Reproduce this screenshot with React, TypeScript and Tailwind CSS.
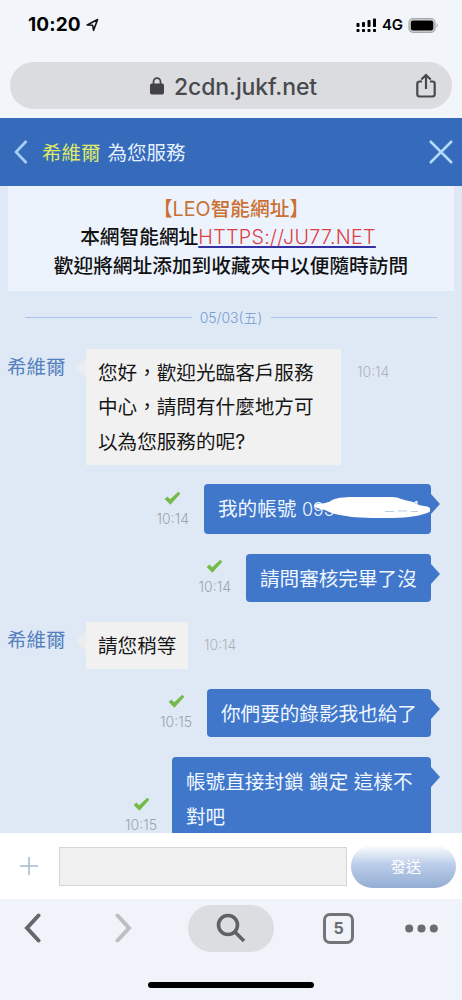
import { type ReactNode } from "react";

type Message = {
  id: number;
  from: "agent" | "me";
  time: string;
  width: string;
  lines: ReactNode[];
};

const AGENT = "希維爾";

const messages: Message[] = [
  {
    id: 1,
    from: "agent",
    time: "10:14",
    width: "w-[255px]",
    lines: ["您好，歡迎光臨客戶服務", "中心，請問有什麼地方可", "以為您服務的呢?"],
  },
  { id: 2, from: "me", time: "10:14", width: "w-[227px]", lines: [<HiddenAccount key="account" />] },
  { id: 3, from: "me", time: "10:14", width: "w-[185px]", lines: ["請問審核完畢了沒"] },
  { id: 4, from: "agent", time: "10:14", width: "w-[102px]", lines: ["請您稍等"] },
  { id: 5, from: "me", time: "10:15", width: "w-[224px]", lines: ["你們要的錄影我也給了"] },
  { id: 6, from: "me", time: "10:15", width: "w-[259px]", lines: ["帳號直接封鎖 鎖定 這樣不", "對吧"] },
];

function HiddenAccount() {
  return (
    <span className="flex justify-between">
      <span>
        我的帳號 <span className="font-['Inter'] text-[18px] font-light">093</span>
      </span>
      <span className="font-['Inter'] text-[18px] font-light">1</span>
      <svg className="absolute top-[10px] left-[108px]" width="118" height="27" viewBox="0 0 118 27">
        <path
          d="M2 11 C7 9 13 10 17 8 C25 2 38 3 50 3 L80 3 C87 3 90 6 97 7 C103 8 104 11 112 12 C120 13 121 17 115 19 C105 23 90 24 76 24 C62 24 45 24 34 22 C25 21 18 19 13 16 C9 15 2 14 2 11Z"
          fill="#fff"
        />
        <path d="M73 17.5 H82 M86 17 H95 M99 17.5 H106" stroke="#aabde0" strokeWidth="0.8" />
      </svg>
    </span>
  );
}

function StatusBar() {
  return (
    <div className="flex h-[62px] items-start justify-between pt-[13px] pr-[23px] pl-[28px] text-black">
      <div className="flex items-center gap-[5px]">
        <span className="text-[19px] leading-6 font-bold tracking-[0.1px]">10:20</span>
        <svg width="13" height="14" viewBox="0 0 13 14">
          <path
            d="M1.2 7 L11.6 1.5 L7.6 12.3 L6.6 7.2Z"
            fill="none"
            stroke="#111"
            strokeWidth="1.6"
            strokeLinejoin="round"
          />
        </svg>
      </div>
      <div className="flex h-6 items-center">
        <svg width="21" height="15" viewBox="0 0 21 15" fill="#000">
          <rect x="0.5" y="5" width="3" height="4" rx="0.8" />
          <rect x="6" y="4" width="3" height="5" rx="0.8" />
          <rect x="11.5" y="2" width="3" height="7" rx="0.8" />
          <rect x="17" y="0.5" width="3" height="8.5" rx="0.8" />
          <rect x="0.5" y="11" width="3" height="3" rx="0.8" />
          <rect x="6" y="11" width="3" height="3" rx="0.8" />
          <rect x="11.5" y="11" width="3" height="3" rx="0.8" />
          <rect x="17" y="11" width="3" height="3" rx="0.8" />
        </svg>
        <span className="ml-[5px] w-[21px] text-[15px] font-semibold tracking-[-0.3px]">4G</span>
        <svg className="ml-[5px]" width="31" height="15" viewBox="0 0 31 15">
          <rect x="1" y="0.7" width="26" height="13.6" rx="4" fill="#d5d7da" stroke="#a5a7aa" strokeWidth="1.2" />
          <rect x="2.8" y="2.5" width="22.5" height="10" rx="2.2" fill="#000" />
          <path d="M28.5 5 Q31 7.5 28.5 10Z" fill="#aaa" />
        </svg>
      </div>
    </div>
  );
}

function AddressBar() {
  return (
    <div className="mx-[10px] flex h-[47px] items-center rounded-full bg-[#dbdce0] pr-[16px] pl-[140px] text-[#48494d]">
      <svg width="14" height="18" viewBox="0 0 14 18">
        <rect x="0" y="6.5" width="14" height="11" rx="1.8" fill="#434347" />
        <path d="M3.5 7 V4.7 a3.5 3.5 0 0 1 7 0 V7" fill="none" stroke="#434347" strokeWidth="1.7" />
      </svg>
      <span className="mt-[3px] ml-[10px] flex-1 text-[23px] font-medium tracking-[-0.12px]">2cdn.jukf.net</span>
      <svg width="20" height="26" viewBox="0 0 20 26" fill="none" stroke="#48494d" strokeWidth="2.2">
        <path d="M6 8.5 H3.5 Q1.3 8.5 1.3 10.7 V21.3 Q1.3 23.5 3.5 23.5 H16.5 Q18.7 23.5 18.7 21.3 V10.7 Q18.7 8.5 16.5 8.5 H14" />
        <path d="M10 16 V2.5 M5.3 6.5 L10 2 L14.7 6.5" />
      </svg>
    </div>
  );
}

function ChatHeader() {
  return (
    <header className="mt-[9px] flex h-[68px] items-center bg-[#366abb] pr-[9px] pl-[14px]">
      <svg width="14" height="24" viewBox="0 0 14 24" fill="none" stroke="#a9d0f8" strokeWidth="2.6">
        <path d="M12.5 1 L2 12 L12.5 23" />
      </svg>
      <h1 className="mt-[3px] ml-[14px] flex-1 text-[19.5px] font-normal text-[#e4f1ff]">
        <span className="mr-[7px] text-[#dfec68]">{AGENT}</span>為您服務
      </h1>
      <svg width="24" height="24" viewBox="0 0 24 24" stroke="#b5d9fb" strokeWidth="2.5">
        <path d="M1 1 L23 23 M23 1 L1 23" />
      </svg>
    </header>
  );
}

function Notice() {
  return (
    <div className="mr-[8px] ml-[8px] h-[105px] shrink-0 bg-[#ecf3fd] pt-[9px] text-center text-[19.7px] leading-[28.4px] font-medium whitespace-nowrap text-[#111]">
      <p className="text-[#ca7032]">
        【<span className="font-normal">LEO</span>智能網址】
      </p>
      <p className="pr-[6px]">
        本網智能網址
        <a
          href="#"
          className="font-light tracking-[0.3px] text-[#dc3f42] underline decoration-[#3431a3] decoration-2 underline-offset-2"
        >
          HTTPS://JU77.NET
        </a>
      </p>
      <p>歡迎將網址添加到收藏夾中以便隨時訪問</p>
    </div>
  );
}

function DateLine() {
  return (
    <div className="mt-[12px] flex h-[28px] shrink-0 items-center pr-[25px] pl-[25px] text-[14px] text-[#759bd3]">
      <div className="h-px flex-1 bg-[#a9c3ea]" />
      <span className="w-[79px] text-center font-light">05/03(五)</span>
      <div className="h-px flex-1 bg-[#a9c3ea]" />
    </div>
  );
}

function Check() {
  return (
    <svg width="17" height="15" viewBox="0 0 17 15">
      <path d="M0.7 8 L3.4 5.6 L6.2 8.2 L14.3 0.8 L16.3 2.8 L6.4 13.8Z" fill="#73bb48" />
    </svg>
  );
}

function ChatMessage({ message }: { message: Message }) {
  const { from, time, width, lines } = message;

  if (from === "agent") {
    return (
      <div className="flex shrink-0">
        <span className="w-[68px] pt-px pl-[7px] text-[19.5px] leading-[34px] text-[#5580bd]">{AGENT}</span>
        <svg className="mt-[9px] ml-[8px]" width="10" height="20" viewBox="0 0 10 20">
          <path d="M10 0 L0 10 L10 20Z" fill="#ebedef" />
        </svg>
        <div
          className={`${width} bg-[#f1f1f1] pt-[7px] pb-[6px] pl-[12px] text-[19.6px] leading-[34.3px] whitespace-nowrap text-[#161616]`}
        >
          {lines.map((line, i) => (
            <p key={i}>{line}</p>
          ))}
        </div>
        <span className="mt-[11px] ml-[16px] text-[14px] leading-6 font-light text-[#aeb2b8]">{time}</span>
      </div>
    );
  }

  return (
    <div className="flex shrink-0 items-end justify-end pr-[22px]">
      <div className="mr-[15px] mb-[3px] flex flex-col items-center">
        <Check />
        <span className="mt-px text-[14px] leading-[24px] font-light text-[#9ea3ad]">{time}</span>
      </div>
      <div
        className={`${width} relative rounded-[4px] bg-[#4077cb] pt-[8px] pr-[12px] pb-[6px] pl-[14px] text-[19.6px] leading-[34.6px] whitespace-nowrap text-[#f0f7ff]`}
      >
        {lines.map((line, i) => (
          <p key={i}>{line}</p>
        ))}
      </div>
      <svg className="mt-[10px] self-start" width="9" height="20" viewBox="0 0 9 20">
        <path d="M0 0 L9 10 L0 20Z" fill="#4077cb" />
      </svg>
    </div>
  );
}

function Composer() {
  return (
    <div className="flex h-[66px] shrink-0 items-center bg-white pl-[20px]">
      <svg width="18" height="18" viewBox="0 0 18 18" stroke="#a7b7cf" strokeWidth="1.5">
        <path d="M9 0 V18 M0 9 H18" />
      </svg>
      <input
        className="ml-[21px] h-[39px] w-[288px] min-w-0 shrink-0 border border-[#d5d5d5] bg-[#f0f0f0]"
        type="text"
      />
      <button className="ml-[4px] h-[43px] w-[105px] shrink-0 rounded-full bg-linear-to-b from-white via-[#bccdea] via-45% to-[#93aed3] pt-[2px] pl-[5px] text-[15.2px] text-white">
        發送
      </button>
    </div>
  );
}

function Toolbar() {
  return (
    <nav className="flex h-[101px] shrink-0 flex-col bg-[#f0f3f9]">
      <div className="mt-[5px] flex h-[48px] items-center pl-[24px]">
        <svg
          width="17"
          height="30"
          viewBox="0 0 17 30"
          fill="none"
          stroke="#66676a"
          strokeWidth="4"
          strokeLinecap="round"
        >
          <path d="M14.5 2.5 L3 15 L14.5 27.5" />
        </svg>
        <svg
          className="ml-[74px]"
          width="17"
          height="30"
          viewBox="0 0 17 30"
          fill="none"
          stroke="#bcbec2"
          strokeWidth="4"
          strokeLinecap="round"
        >
          <path d="M2.5 2.5 L14 15 L2.5 27.5" />
        </svg>
        <div className="ml-[56px] flex h-[47px] w-[86px] items-center justify-center rounded-full bg-[#dbdde1]">
          <svg width="30" height="30" viewBox="0 0 30 30" fill="none" stroke="#606164" strokeWidth="3.6">
            <circle cx="12" cy="12" r="9.5" />
            <path d="M19 19 L28 28" />
          </svg>
        </div>
        <div className="ml-[49px] flex h-[31px] w-[31px] items-center justify-center rounded-[7px] border-[3px] border-[#737477] text-[16px] font-bold text-[#6b6c6f]">
          5
        </div>
        <svg className="ml-[51px]" width="33" height="9" viewBox="0 0 33 9" fill="#6b6c6f">
          <circle cx="4.2" cy="4.5" r="4" />
          <circle cx="16.5" cy="4.5" r="4" />
          <circle cx="28.8" cy="4.5" r="4" />
        </svg>
      </div>
      <div className="mt-[30px] ml-[148px] h-[6px] w-[166px] rounded-full bg-black" />
    </nav>
  );
}

export default function App() {
  return (
    <div
      lang="zh-Hant"
      className="flex h-[1000px] w-[462px] flex-col overflow-hidden bg-[#f2f5fa] font-['Inter','Noto_Sans_CJK_TC',sans-serif]"
    >
      <StatusBar />
      <AddressBar />
      <ChatHeader />
      <main className="flex h-[647px] flex-col overflow-hidden bg-[#dfe9f5]">
        <Notice />
        <DateLine />
        <div className="mt-[18px] flex flex-col gap-[19.6px]">
          {messages.map((message) => (
            <ChatMessage key={message.id} message={message} />
          ))}
        </div>
      </main>
      <Composer />
      <Toolbar />
    </div>
  );
}
